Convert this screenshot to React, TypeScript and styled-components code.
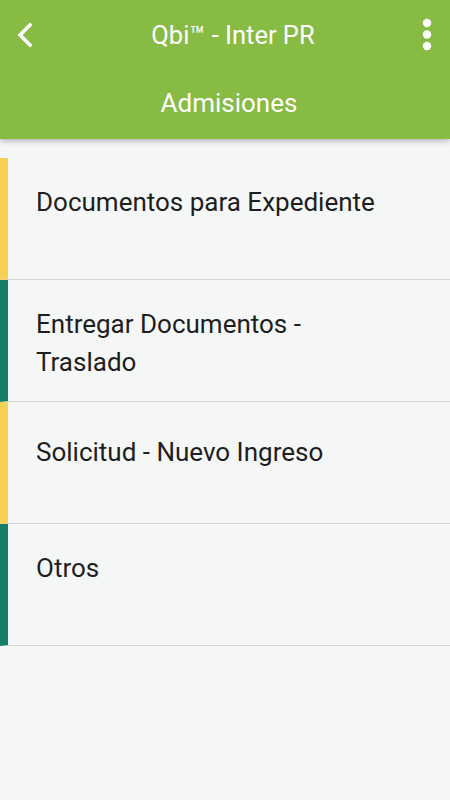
import React from "react"
import styled, { createGlobalStyle } from "styled-components"

const items = [
  { title: "Documentos para Expediente", accent: "#f7d154", shift: 0 },
  { title: "Entregar Documentos - Traslado", accent: "#137f69", shift: 0 },
  { title: "Solicitud - Nuevo Ingreso", accent: "#f7d154", shift: 6 },
  { title: "Otros", accent: "#137f69", shift: 0 },
]

export default function App() {
  return (
    <>
      <GlobalStyle />
      <S.Page>
        <S.Header>
          <S.TopRow>
            <S.IconButton aria-label="back">
              <svg width="18" height="26" viewBox="0 0 18 26">
                <path d="M14 3 L4 13 L14 23" fill="none" stroke="#fff" strokeWidth="3.6" strokeLinecap="square" />
              </svg>
            </S.IconButton>
            <S.Title>Qbi™ - Inter PR</S.Title>
            <S.IconButton aria-label="menu">
              <svg width="10" height="34" viewBox="0 0 10 34">
                <circle cx="5" cy="5" r="4.2" fill="#fff" />
                <circle cx="5" cy="16.5" r="4.2" fill="#fff" />
                <circle cx="5" cy="28" r="4.2" fill="#fff" />
              </svg>
            </S.IconButton>
          </S.TopRow>
          <S.Subtitle>Admisiones</S.Subtitle>
        </S.Header>
        <S.List>
          {items.map((item) => (
            <S.Row key={item.title} accent={item.accent}>
              <S.RowText shift={item.shift}>{item.title}</S.RowText>
            </S.Row>
          ))}
        </S.List>
      </S.Page>
    </>
  )
}

const GlobalStyle = createGlobalStyle`
  html, body {
    margin: 0;
    padding: 0;
    background: #f5f7f6;
  }
  body {
    font-family: Roboto, "Liberation Sans", sans-serif;
  }
`

const S = {
  Page: styled.div`
    width: 450px;
    min-height: 800px;
    background: #f5f7f6;
  `,
  Header: styled.header`
    height: 139px;
    background: #87bb44;
    box-shadow: 0px 2px 6px rgba(0, 0, 0, 0.28);
    display: flex;
    flex-direction: column;
    color: #fff;
  `,
  TopRow: styled.div`
    height: 69px;
    display: flex;
    align-items: center;
    justify-content: space-between;
    padding: 0 12px 0 14px;
  `,
  IconButton: styled.div`
    width: 22px;
    display: flex;
    align-items: center;
    justify-content: center;
    margin-top: 1px;
  `,
  Title: styled.div`
    flex: 1;
    text-align: center;
    font-size: 25.5px;
    padding-left: 14px;
    margin-top: 1px;
  `,
  Subtitle: styled.div`
    flex: 1;
    display: flex;
    align-items: center;
    justify-content: center;
    font-size: 26px;
    padding-left: 8px;
    padding-bottom: 3px;
  `,
  List: styled.div`
    margin-top: 19px;
    display: flex;
    flex-direction: column;
  `,
  Row: styled.div<{ accent: string }>`
    height: 121px;
    border-left: 8px solid ${(props) => props.accent};
    border-bottom: 1px solid #d6d8d7;
    padding: 0 60px 0 28px;
  `,
  RowText: styled.div<{ shift: number }>`
    padding-top: ${(props) => 25 + props.shift}px;
    font-size: 26px;
    line-height: 38px;
    color: #1e1e1e;
  `,
}
